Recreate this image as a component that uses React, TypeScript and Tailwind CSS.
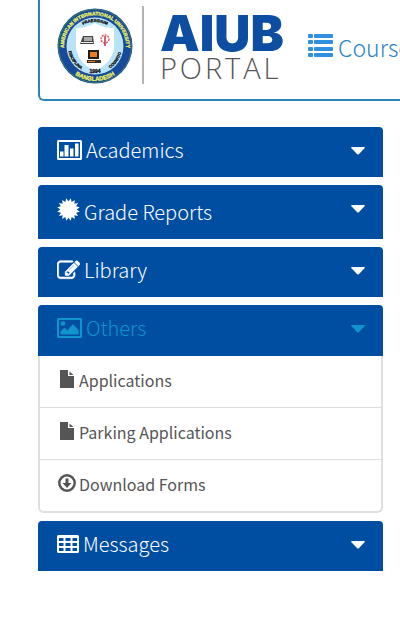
import React from "react";

type IconProps = { className?: string };

function BarChart({ className }: IconProps) {
  return (
    <svg viewBox="0 0 25 20" className={className} fill="currentColor" aria-hidden="true">
      <path fillRule="evenodd" d="M1.500 0h22A1.500 1.500 0 0 1 25 1.500v17a1.500 1.500 0 0 1-1.500 1.500h-22A1.500 1.500 0 0 1 0 18.500v-17A1.500 1.500 0 0 1 1.500 0zM2 2v16h21V2z" />
      <path d="M3 11.500h3.500V16.500h-3.500zM7.500 5h4v11.500h-4zM13 8.500h3.500V16.500H13zM18 3.500h3.500v13H18z" />
    </svg>
  );
}

const burst = Array.from({ length: 32 }, (_, i) => {
  const angle = (i * Math.PI) / 16 - Math.PI / 2 + Math.PI / 16;
  const radius = i % 2 === 0 ? 12 : 8.6;
  return `${12 + radius * Math.cos(angle)},${12 + radius * Math.sin(angle)}`;
}).join(" ");

function Burst({ className }: IconProps) {
  return (
    <svg viewBox="0 0 24 24" className={className} fill="currentColor" aria-hidden="true">
      <polygon points={burst} />
    </svg>
  );
}

function Edit({ className }: IconProps) {
  return (
    <svg viewBox="0 0 1792 1792" className={className} fill="currentColor" stroke="currentColor" strokeWidth="45" aria-hidden="true">
      <path d="M888 1184l116-116-152-152-116 116v56h96v96h56zm440-720q-16-16-33 1l-350 350q-17 17-1 33t33-1l350-350q17-17 1-33zm80 594v190q0 119-84.500 203.500t-203.500 84.500h-832q-119 0-203.500-84.500t-84.500-203.500v-832q0-119 84.500-203.500t203.500-84.500h832q63 0 117 25 15 7 18 23 3 17-9 29l-49 49q-14 14-32 8-23-6-45-6h-832q-66 0-113 47t-47 113v832q0 66 47 113t113 47h832q66 0 113-47t47-113v-126q0-13 9-22l64-64q15-15 35-7t20 29zm-96-738l288 288-672 672h-288v-288zm444 132l-92 92-288-288 92-92q28-28 68-28t68 28l152 152q28 28 28 68t-28 68z" />
    </svg>
  );
}

function Picture({ className }: IconProps) {
  return (
    <svg viewBox="0 0 25 20" className={className} fill="currentColor" aria-hidden="true">
      <path fillRule="evenodd" d="M1.500 0h22A1.500 1.500 0 0 1 25 1.500v17a1.500 1.500 0 0 1-1.500 1.500h-22A1.500 1.500 0 0 1 0 18.500v-17A1.500 1.500 0 0 1 1.500 0zM2 2v16h21V2z" />
      <circle cx="6" cy="5.500" r="2.300" />
      <path d="M3.500 16.500v-3l4-4 3 3 5.500-6.500 5.500 6v4.500z" />
    </svg>
  );
}

function File({ className }: IconProps) {
  return (
    <svg viewBox="0 0 14 18" className={className} fill="currentColor" aria-hidden="true">
      <path d="M0 0h8v6h6v12H0zM9.500 1.500l4 3.500h-4z" />
    </svg>
  );
}

function Download({ className }: IconProps) {
  return (
    <svg viewBox="0 0 18 18" className={className} fill="currentColor" aria-hidden="true">
      <circle cx="9" cy="9" r="7.700" fill="none" stroke="currentColor" strokeWidth="2.500" />
      <path d="M7.500 4.500h3v4.500H13.500l-4.500 5-4.500-5h3z" />
    </svg>
  );
}

function Grid({ className }: IconProps) {
  return (
    <svg viewBox="0 0 22 18" className={className} fill="currentColor" aria-hidden="true">
      <path fillRule="evenodd" d="M1.500 0h19A1.500 1.500 0 0 1 22 1.500v15a1.500 1.500 0 0 1-1.500 1.500h-19A1.500 1.500 0 0 1 0 16.500v-15A1.500 1.500 0 0 1 1.500 0zM2 3v3h4.500V3zM8.500 3v3h5V3zM15.500 3v3H20V3zM2 8v3h4.500V8zM8.500 8v3h5V8zM15.500 8v3H20V8zM2 13v3h4.500v-3zM8.500 13v3h5v-3zM15.500 13v3H20v-3z" />
    </svg>
  );
}

function ListIcon({ className }: IconProps) {
  return (
    <svg viewBox="0 0 25 24" className={className} fill="currentColor" aria-hidden="true">
      {[0, 6, 13, 19].map((y) => (
        <g key={y}>
          <rect x="0" y={y} width="5" height="4" rx="1" />
          <rect x="6" y={y} width="19" height="4" rx="1" />
        </g>
      ))}
    </svg>
  );
}

function Caret({ className }: IconProps) {
  return (
    <svg viewBox="0 0 14 8" className={className} fill="currentColor" aria-hidden="true">
      <path d="M.8 0h12.400q1.200.3.300 1.300L7.800 7.200q-.8.800-1.600 0L.5 1.300Q-.4.300.8 0z" />
    </svg>
  );
}

function Seal({ className }: IconProps) {
  return (
    <svg viewBox="0 0 76 76" className={className} role="img" aria-label="American International University Bangladesh">
      <defs>
        <path id="ring-top" d="M12.500 56A31 31 0 1 1 63.500 56" />
        <path id="ring-bottom" d="M13 62.500A35 35 0 0 0 63 62.500" />
        <path id="inner-top" d="M20 22A24 24 0 0 1 56 22" />
        <path id="inner-left" d="M11 38A27 27 0 0 0 29 63.500" />
        <path id="inner-right" d="M47 63.500A27 27 0 0 0 65 38" />
      </defs>
      <circle cx="38" cy="38" r="37.500" fill="#174a9b" />
      <circle cx="38" cy="38" r="36.500" fill="none" stroke="#3d7a65" strokeWidth="1" />
      <circle cx="38" cy="38" r="28.500" fill="#b9e3f7" />
      <path d="M38 15q8 5 19 5v20q-2 15-19 23-17-8-19-23V20q11 0 19-5z" fill="#fff" />
      <g fontFamily="Liberation Sans, Arial, sans-serif" fontWeight="700" textAnchor="middle">
        <g fontSize="5" fill="#f0f25a" stroke="#f0f25a" strokeWidth="0.300">
          <text><textPath href="#ring-top" startOffset="50%">AMERICAN INTERNATIONAL UNIVERSITY</textPath></text>
          <text fontSize="6"><textPath href="#ring-bottom" startOffset="50%">BANGLADESH</textPath></text>
        </g>
        <g fontSize="4" fill="#111" stroke="#111" strokeWidth="0.300">
          <text><textPath href="#inner-top" startOffset="50%">PRAESIDIUM</textPath></text>
          <text><textPath href="#inner-left" startOffset="50%">DISCIPLINA</textPath></text>
          <text><textPath href="#inner-right" startOffset="50%">COGNITIO</textPath></text>
          <text x="38" y="65" fontSize="5">1994</text>
        </g>
      </g>
      <path d="M26 28h10l1 8H23z" fill="#444" />
      <path d="M27 29h8v4h-8z" fill="#aaa" />
      <path d="M24 34.500h12" stroke="#eee" />
      <circle cx="48" cy="31" r="4" fill="none" stroke="#df5a65" strokeWidth="1.500" strokeDasharray="2 1" />
      <path d="M48 28v10" stroke="#b63844" strokeWidth="1.500" />
      <path d="M31 42h11v9H31z" fill="#221d1a" />
      <path d="M33 44h7v5h-7z" fill="#e87b26" />
      <path d="M30 52h14v3H30z" fill="#3a3029" />
      <path d="M31 53.500h7" stroke="#e87b26" />
    </svg>
  );
}

type PanelProps = {
  label: string;
  icon: React.ReactNode;
  size?: "normal" | "tall";
  open?: boolean;
  children?: React.ReactNode;
};

function Panel({ label, icon, size = "normal", open = false, children }: PanelProps) {
  const tall = size === "tall";
  const height = tall ? "h-[54px]" : open ? "h-[51px]" : "h-[50px]";
  return (
    <section>
      <button
        type="button"
        aria-expanded={open}
        className={`flex w-full items-start justify-between rounded-t bg-[#004ea2] pr-[18px] pl-[19px] text-left text-[20px] leading-6 font-light ${tall ? "pt-3" : "pt-[11px]"} ${height} ${open ? "text-[#0f94cc]" : "text-white"}`}
      >
        <span className="flex items-start gap-1">
          <span className="flex h-6 items-center">{icon}</span>
          <span className={tall ? "pt-[3px]" : ""}>{label}</span>
        </span>
        <Caret className={`h-2 w-[14px] ${tall ? "mt-2" : "mt-[9px]"}`} />
      </button>
      {children}
    </section>
  );
}

const links = [
  { label: "Applications", icon: <File className="mt-[2px] mr-[5px] ml-[2px] h-[18px] w-[14px]" /> },
  { label: "Parking Applications", icon: <File className="mt-[2px] mr-[5px] ml-[2px] h-[18px] w-[14px]" /> },
  { label: "Download Forms", icon: <Download className="mt-[2px] mr-[3px] h-[18px] w-[18px]" /> },
];

export default function App() {
  return (
    <div className="overflow-hidden bg-white pb-14 pl-[38px] font-['Source_Sans_Pro','Noto_Sans_CJK_SC',sans-serif]">
      <header className="flex h-[101px] overflow-hidden rounded-bl-md border-b-2 border-l-2 border-[#2b86b5] pl-[17px] whitespace-nowrap">
        <a href="#home" className="flex shrink-0 items-start">
          <Seal className="mt-2 h-[76px] w-[76px]" />
          <span className="mt-[6px] ml-[9px] h-[78px] w-[2px] bg-[#b3b3b6]" />
          <span className="ml-4 flex w-[130px] flex-col pt-[9px]">
            <span className="font-['Inter','Open_Sans',sans-serif] text-[50px] leading-[48px] font-black text-[#0d4ea2]">AIUB</span>
            <span className="font-['Open_Sans','Noto_Sans',sans-serif] text-[29px] leading-[22px] font-light tracking-widest text-[#555]">PORTAL</span>
          </span>
        </a>
        <nav className="ml-[18px]">
          <a href="#courses" className="flex items-start gap-[5px] pt-[29px] text-[23px] leading-9 font-light text-[#2d83c8]">
            <ListIcon className="mt-[5px] h-6 w-[25px] shrink-0 text-[#3090df]" />
            <span>Course</span>
          </a>
        </nav>
      </header>
      <main className="mt-[26px] mr-[17px] flex flex-col gap-2">
        <Panel label="Academics" icon={<BarChart className="h-5 w-[25px]" />} />
        <Panel label="Grade Reports" size="tall" icon={<Burst className="h-[23px] w-[23px]" />} />
        <Panel label="Library" icon={<Edit className="h-[23px] w-[23px]" />} />
        <Panel label="Others" open icon={<Picture className="h-5 w-[25px]" />}>
          <ul className="rounded-b-md border-2 border-t-0 border-[#dddfe2]">
            {links.map(({ label, icon }) => (
              <li key={label} className="border-t border-[#dcdcdc] first:border-t-0">
                <a href="#forms" className="flex h-[51px] items-start pt-3 pl-[18px] text-[16px] leading-6 text-[#555]">
                  {icon}
                  <span>{label}</span>
                </a>
              </li>
            ))}
          </ul>
        </Panel>
        <Panel label="Messages" icon={<Grid className="h-[18px] w-[22px]" />} />
      </main>
    </div>
  );
}
